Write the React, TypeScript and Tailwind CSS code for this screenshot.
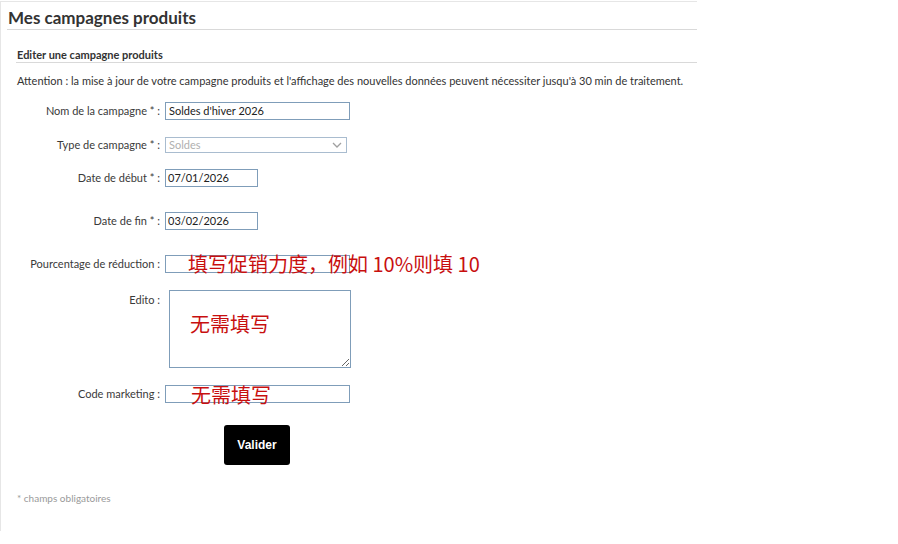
import React from "react";

const font = { fontFamily: "Lato, 'Liberation Sans', sans-serif" };

function Row({
  label,
  children,
  className = "",
  top = false,
}: {
  label: string;
  children: React.ReactNode;
  className?: string;
  top?: boolean;
}) {
  return (
    <div className={`flex ${top ? "items-start" : "items-center"} ${className}`}>
      <div
        className={`w-[159px] shrink-0 text-right text-[11px] leading-[14px] text-[#3a3a3a] ${top ? "mt-[3px]" : ""}`}
      >
        {label}
      </div>
      {children}
    </div>
  );
}

const cjk = { fontFamily: "'Noto Sans CJK SC', 'Noto Sans', sans-serif" };

export default function App() {
  return (
    <div className="w-[898px] h-[544px] bg-white" style={font}>
      <div className="mt-px w-[697px] h-[530px] border-l border-t border-[#e6e6e6]">
        <div className="ml-[6px] pl-px pt-[6px] pb-px border-b border-[#d9d9d9] text-[17px] leading-[20px] font-bold text-[#333]">
          Mes campagnes produits
        </div>
        <div className="ml-[15px] mt-[18px] pl-px border-b border-[#d9d9d9] text-[11px] leading-[14px] font-bold text-[#333]">
          Editer une campagne produits
        </div>
        <div className="ml-[16px] mt-[11px] text-[11px] leading-[14px] text-[#333]">
          Attention : la mise à jour de votre campagne produits et l'affichage des nouvelles données peuvent nécessiter jusqu'à 30 min de traitement.
        </div>

        <Row label="Nom de la campagne * :" className="mt-[14px]">
          <div className="ml-[5px] w-[185px] h-[18px] border border-[#7f9db9] px-[3px] text-[11px] leading-[16px] text-[#222]">
            Soldes d'hiver 2026
          </div>
        </Row>

        <Row label="Type de campagne * :" className="mt-[17px]">
          <div className="ml-[5px] w-[182px] h-[16px] border border-[#a9bccf] px-[3px] flex items-center justify-between text-[11px] leading-[14px] text-[#b0b0b0]">
            <span>Soldes</span>
            <svg width="10" height="6" viewBox="0 0 10 6" className="mr-[1px]">
              <path d="M1 1 L5 5 L9 1" fill="none" stroke="#a0a0a0" strokeWidth="1.3" />
            </svg>
          </div>
        </Row>

        <Row label="Date de début * :" className="mt-[16px]">
          <div className="ml-[5px] w-[93px] h-[18px] border border-[#7f9db9] px-[2px] text-[11px] leading-[16px] text-[#222]">
            07/01/2026
          </div>
        </Row>

        <Row label="Date de fin * :" className="mt-[25px]">
          <div className="ml-[5px] w-[93px] h-[18px] border border-[#7f9db9] px-[2px] text-[11px] leading-[16px] text-[#222]">
            03/02/2026
          </div>
        </Row>

        <Row label="Pourcentage de réduction :" className="mt-[25px]">
          <div className="relative ml-[5px] w-[185px] h-[18px] border border-[#7f9db9]">
            <span
              className="absolute left-[22px] top-[-2px] whitespace-nowrap text-[20px] leading-[20px] text-[#c80f0f]"
              style={cjk}
            >
              填写促销力度，例如 10%则填 10
            </span>
          </div>
        </Row>

        <Row label="Edito :" className="mt-[17px]" top>
          <div className="relative ml-[9px] w-[182px] h-[78px]">
            <textarea className="block w-[182px] h-[78px] border border-[#7f9db9] outline-none" />
            <span
              className="pointer-events-none absolute left-[21px] top-[24px] whitespace-nowrap text-[20px] leading-[20px] text-[#c80f0f]"
              style={cjk}
            >
              无需填写
            </span>
          </div>
        </Row>

        <Row label="Code marketing :" className="mt-[17px]">
          <div className="relative ml-[5px] w-[185px] h-[18px] border border-[#7f9db9]">
            <span
              className="absolute left-[25px] top-[-1px] whitespace-nowrap text-[20px] leading-[20px] text-[#c80f0f]"
              style={cjk}
            >
              无需填写
            </span>
          </div>
        </Row>

        <div className="mt-[22px] ml-[223px]">
          <button
            className="w-[66px] h-[40px] rounded-[3px] bg-black text-white text-[12px] font-bold"
            style={{ fontFamily: "'Liberation Sans', Arial, sans-serif" }}
          >
            Valider
          </button>
        </div>

        <div className="ml-[16px] mt-[27px] text-[10px] leading-[12px] text-[#9a9a9a]">
          * champs obligatoires
        </div>
      </div>
    </div>
  );
}
